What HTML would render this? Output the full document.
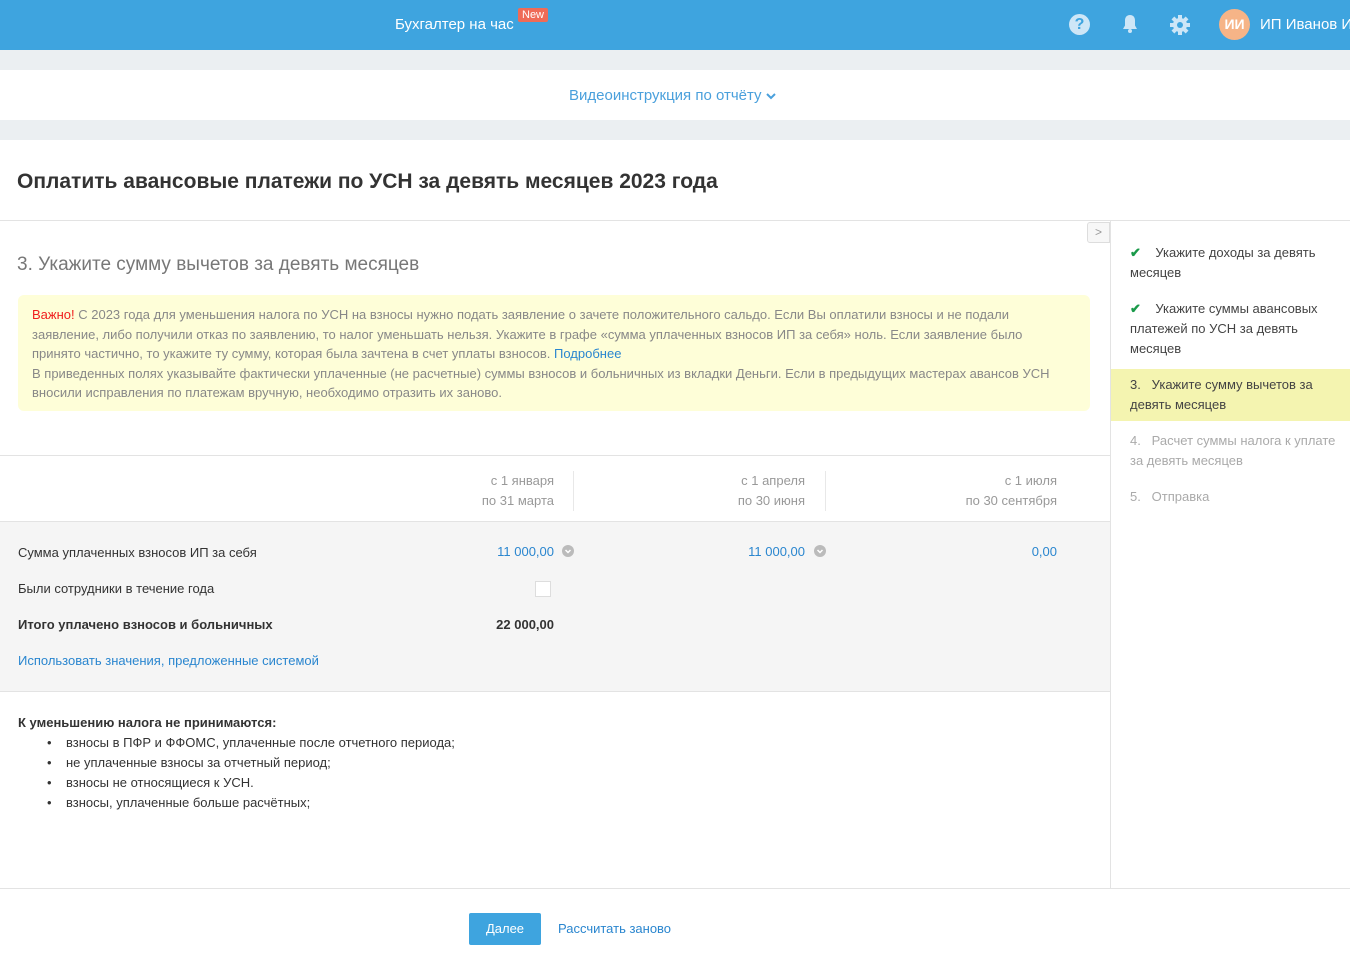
<!DOCTYPE html>
<html><head><meta charset="utf-8"><style>
*{box-sizing:border-box;margin:0;padding:0}
body{width:1350px;height:963px;overflow:hidden;font-family:"Liberation Sans",sans-serif;font-size:13px;color:#333;background:#fff;position:relative}
.a{position:absolute;white-space:nowrap}
.hdr{position:absolute;left:0;top:0;width:1350px;height:50px;background:#3ea4df}
.gb{position:absolute;left:0;width:1350px;background:#ebeff2}
.line{position:absolute;height:1px;background:#e3e3e3}
.blue{color:#2a86cf}
</style></head><body>
<div class="hdr">
 <div class="a" style="left:395px;top:16px;color:#fff;font-size:15px">Бухгалтер на час</div>
 <div class="a" style="left:518px;top:8px;background:#ef6b57;color:#fff;font-size:11px;padding:1px 4px;border-radius:2px">New</div>
 <div class="a" style="left:1069px;top:14px;width:21px;height:21px;border-radius:50%;background:#cde6f7;color:#3ea4df;font-weight:bold;font-size:16px;text-align:center;line-height:21px">?</div>
 <svg class="a" style="left:1120px;top:13px" width="20" height="22" viewBox="0 0 20 22"><path d="M10 2c-3.5 0-5 2.6-5 5.5v5L3 16h14l-2-3.5v-5C15 4.6 13.5 2 10 2z" fill="#cde6f7"/><circle cx="10" cy="18" r="2" fill="#cde6f7"/></svg>
 <svg class="a" style="left:1169px;top:14px" width="22" height="22" viewBox="0 0 22 22"><g fill="#cde6f7"><circle cx="11" cy="11" r="7"/><rect x="9" y="1" width="4" height="20"/><rect x="1" y="9" width="20" height="4"/><rect x="9" y="1" width="4" height="20" transform="rotate(45 11 11)"/><rect x="9" y="1" width="4" height="20" transform="rotate(-45 11 11)"/></g><circle cx="11" cy="11" r="3" fill="#3ea4df"/></svg>
 <div class="a" style="left:1219px;top:9px;width:31px;height:31px;border-radius:50%;background:#f6b487;color:#fff;font-weight:bold;font-size:14px;text-align:center;line-height:31px">ИИ</div>
 <div class="a" style="left:1260px;top:16px;color:#fff;font-size:15px">ИП Иванов И</div>
</div>
<div class="gb" style="top:50px;height:20px"></div>
<div class="a" style="left:569px;top:87px;color:#4aa0dc;font-size:15px">Видеоинструкция по отчёту <svg width="10" height="8" viewBox="0 0 10 8" style="vertical-align:middle"><path d="M1 2l4 4 4-4" stroke="#4aa0dc" stroke-width="2" fill="none"/></svg></div>
<div class="gb" style="top:120px;height:20px"></div>
<div class="a" style="left:17px;top:170px;font-size:21px;font-weight:bold;color:#333">Оплатить авансовые платежи по УСН за девять месяцев 2023 года</div>
<div class="line" style="left:0;top:220px;width:1350px"></div>
<div style="position:absolute;left:1110px;top:220px;width:1px;height:668px;background:#e3e3e3"></div>
<div class="a" style="left:1087px;top:222px;width:23px;height:21px;border:1px solid #ddd;border-radius:3px 0 0 3px;background:#f7f7f7;color:#999;font-size:12px;text-align:center;line-height:19px">&gt;</div>
<div class="a" style="left:17px;top:254px;font-size:19px;color:#777">3. Укажите сумму вычетов за девять месяцев</div>
<div class="a" style="left:18px;top:295px;width:1072px;height:116px;background:#fefed8;border-radius:6px;padding:10px 14px;color:#888;font-size:13px;line-height:19.5px;white-space:nowrap">
<span style="color:#f01e1e">Важно!</span> С 2023 года для уменьшения налога по УСН на взносы нужно подать заявление о зачете положительного сальдо. Если Вы оплатили взносы и не подали<br>заявление, либо получили отказ по заявлению, то налог уменьшать нельзя. Укажите в графе «сумма уплаченных взносов ИП за себя» ноль. Если заявление было<br>принято частично, то укажите ту сумму, которая была зачтена в счет уплаты взносов. <span class="blue">Подробнее</span><br>В приведенных полях указывайте фактически уплаченные (не расчетные) суммы взносов и больничных из вкладки Деньги. Если в предыдущих мастерах авансов УСН<br>вносили исправления по платежам вручную, необходимо отразить их заново.</div>
<div class="line" style="left:0;top:455px;width:1110px"></div>
<div class="a" style="left:400px;top:471px;width:154px;text-align:right;color:#999;line-height:20px">с 1 января<br>по 31 марта</div>
<div style="position:absolute;left:573px;top:471px;width:1px;height:40px;background:#e8e8e8"></div>
<div class="a" style="left:650px;top:471px;width:155px;text-align:right;color:#999;line-height:20px">с 1 апреля<br>по 30 июня</div>
<div style="position:absolute;left:825px;top:471px;width:1px;height:40px;background:#e8e8e8"></div>
<div class="a" style="left:900px;top:471px;width:157px;text-align:right;color:#999;line-height:20px">с 1 июля<br>по 30 сентября</div>
<div style="position:absolute;left:0;top:521px;width:1110px;height:171px;background:#f5f5f5;border-top:1px solid #e3e3e3;border-bottom:1px solid #e3e3e3"></div>
<div class="a" style="left:18px;top:545px">Сумма уплаченных взносов ИП за себя</div>
<div class="a blue" style="left:450px;top:544px;width:104px;text-align:right">11 000,00</div>
<svg class="a" style="left:562px;top:545px" width="12" height="12" viewBox="0 0 12 12"><circle cx="6" cy="6" r="6" fill="#bbb"/><path d="M3.5 5l2.5 2.5L8.5 5" stroke="#fff" stroke-width="1.5" fill="none"/></svg>
<div class="a blue" style="left:700px;top:544px;width:105px;text-align:right">11 000,00</div>
<svg class="a" style="left:814px;top:545px" width="12" height="12" viewBox="0 0 12 12"><circle cx="6" cy="6" r="6" fill="#bbb"/><path d="M3.5 5l2.5 2.5L8.5 5" stroke="#fff" stroke-width="1.5" fill="none"/></svg>
<div class="a blue" style="left:950px;top:544px;width:107px;text-align:right">0,00</div>
<div class="a" style="left:18px;top:581px">Были сотрудники в течение года</div>
<div class="a" style="left:535px;top:581px;width:16px;height:16px;border:1px solid #ddd;background:#fff"></div>
<div class="a" style="left:18px;top:617px;font-weight:bold">Итого уплачено взносов и больничных</div>
<div class="a" style="left:450px;top:617px;width:104px;text-align:right;font-weight:bold">22 000,00</div>
<div class="a blue" style="left:18px;top:653px">Использовать значения, предложенные системой</div>
<div class="a" style="left:18px;top:715px;font-weight:bold">К уменьшению налога не принимаются:</div>
<div class="a" style="left:47px;top:733px;line-height:20px">•<br>•<br>•<br>•</div>
<div class="a" style="left:66px;top:733px;line-height:20px">взносы в ПФР и ФФОМС, уплаченные после отчетного периода;<br>не уплаченные взносы за отчетный период;<br>взносы не относящиеся к УСН.<br>взносы, уплаченные больше расчётных;</div>
<div class="line" style="left:0;top:888px;width:1350px"></div>
<div class="a" style="left:469px;top:913px;width:72px;height:32px;background:#3ea4df;color:#fff;text-align:center;line-height:32px;border-radius:2px">Далее</div>
<div class="a blue" style="left:558px;top:921px">Рассчитать заново</div>
<!-- sidebar -->
<div class="a" style="left:1130px;top:243px;line-height:20px;color:#444"><span style="color:#1a9a4a;font-weight:bold">&#10004;</span>&nbsp;&nbsp;&nbsp; Укажите доходы за девять<br>месяцев</div>
<div class="a" style="left:1130px;top:299px;line-height:20px;color:#444"><span style="color:#1a9a4a;font-weight:bold">&#10004;</span>&nbsp;&nbsp;&nbsp; Укажите суммы авансовых<br>платежей по УСН за девять<br>месяцев</div>
<div class="a" style="left:1111px;top:369px;width:239px;height:52px;background:#f4f4b0"></div>
<div class="a" style="left:1130px;top:375px;line-height:20px;color:#444">3.&nbsp;&nbsp; Укажите сумму вычетов за<br>девять месяцев</div>
<div class="a" style="left:1130px;top:431px;line-height:20px;color:#aaa">4.&nbsp;&nbsp; Расчет суммы налога к уплате<br>за девять месяцев</div>
<div class="a" style="left:1130px;top:487px;line-height:20px;color:#aaa">5.&nbsp;&nbsp; Отправка</div>
</body></html>
